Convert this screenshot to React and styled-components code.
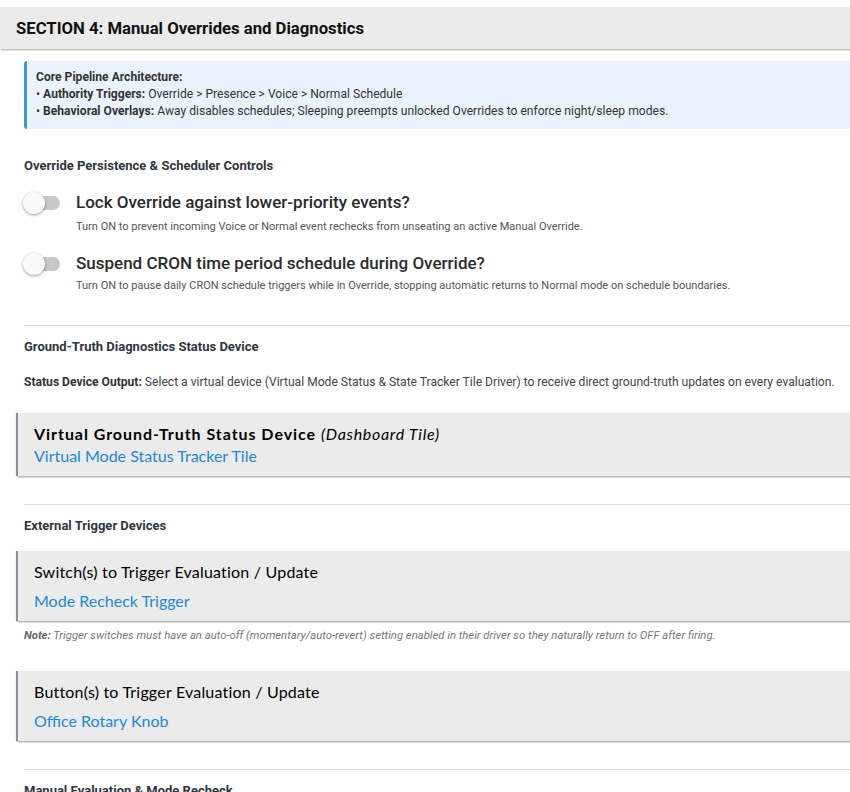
import React from 'react'
import styled, { createGlobalStyle } from 'styled-components'

const GlobalStyle = createGlobalStyle`
    html, body {
        margin: 0;
        padding: 0;
        background: #fff;
        overflow: hidden;
    }
    body {
        font-family: Roboto, "Liberation Sans", sans-serif;
        color: #333;
    }
`

const Page = styled.div`
    width: 870px;
    padding-top: 7px;
`

const SectionHeader = styled.div`
    background: #ebebeb;
    height: 42px;
    display: flex;
    align-items: center;
    padding-left: 16px;
    font-size: 16.7px;
    font-weight: 700;
    color: #111;
    box-shadow: 0 2px 2px -1px rgba(0, 0, 0, 0.35);
`

const Body = styled.div`
    padding: 12px 0 0 24px;
`

const InfoBox = styled.div`
    background: #eaf3fb;
    border-left: 3px solid #3a97d8;
    border-radius: 3px 0 0 3px;
    padding: 8px 12px 9px 9px;
    font-size: 12.1px;
    line-height: 17px;
    color: #333;
`

const InfoTitle = styled.div`
    font-weight: 700;
`

const GroupTitle = styled.div`
    font-size: 13px;
    font-weight: 700;
    color: #2f3640;
    margin-top: ${({ top }) => top || 0}px;
`

const ToggleRow = styled.div`
    display: flex;
    align-items: flex-start;
    margin-top: 17px;
`

const Track = styled.div`
    position: relative;
    flex: none;
    width: 36px;
    height: 14px;
    border-radius: 7px;
    background: #c8c8c8;
    margin-top: 6px;
`

const Knob = styled.div`
    position: absolute;
    left: -1px;
    top: -4px;
    width: 22px;
    height: 22px;
    border-radius: 50%;
    background: #fafafa;
    box-shadow: 0 1px 3px rgba(0, 0, 0, 0.4);
`

const ToggleText = styled.div`
    margin-left: 16px;
`

const ToggleLabel = styled.div`
    font-size: 17px;
    font-weight: 500;
    line-height: 24px;
    color: #2b2b2b;
`

const ToggleHint = styled.div`
    font-size: 11px;
    line-height: 14px;
    color: #555;
    margin-top: ${({ top }) => top}px;
`

const Divider = styled.hr`
    border: none;
    border-top: 1px solid #ddd;
    margin: ${({ top }) => top}px 0 0 0;
`

const Paragraph = styled.div`
    font-size: 12.1px;
    color: #444;
    margin-top: ${({ top }) => top || 0}px;
    b {
        color: #333;
    }
`

const DeviceBox = styled.div`
    margin: ${({ top }) => top}px 0 0 -8px;
    background: #ebebeb;
    border-left: 2px solid #8d8c99;
    padding: ${({ pad }) => pad};
    font-family: "Segoe UI", Lato, "DejaVu Sans", sans-serif;
    box-shadow: 0 2px 2px -1px rgba(0, 0, 0, 0.4), 0 -1px 4px rgba(0, 0, 0, 0.05);
`

const DeviceTitle = styled.div`
    font-size: 16px;
    line-height: 22px;
    color: #000;
    font-weight: ${({ bold }) => (bold ? 700 : 400)};
    letter-spacing: ${({ bold }) => (bold ? 0.95 : 0.2)}px;
    i {
        font-weight: 400;
        letter-spacing: 0.7px;
    }
`

const DeviceLink = styled.div`
    font-size: 16px;
    line-height: 22px;
    color: #1e88d9;
    margin-top: ${({ top }) => top || 0}px;
`

const Note = styled.div`
    font-size: 11.3px;
    font-style: italic;
    color: #777;
    margin-top: 8px;
    b {
        color: #666;
    }
`

const toggles = [
    {
        label: 'Lock Override against lower-priority events?',
        hint: 'Turn ON to prevent incoming Voice or Normal event rechecks from unseating an active Manual Override.'
    },
    {
        label: 'Suspend CRON time period schedule during Override?',
        hint: 'Turn ON to pause daily CRON schedule triggers while in Override, stopping automatic returns to Normal mode on schedule boundaries.'
    }
]

function Toggle() {
    return (
        <Track>
            <Knob />
        </Track>
    )
}

export default function App() {
    return (
        <Page>
            <GlobalStyle />
            <SectionHeader>SECTION 4: Manual Overrides and Diagnostics</SectionHeader>
            <Body>
                <InfoBox>
                    <InfoTitle>Core Pipeline Architecture:</InfoTitle>
                    <div>• <b>Authority Triggers:</b> Override &gt; Presence &gt; Voice &gt; Normal Schedule</div>
                    <div>• <b>Behavioral Overlays:</b> Away disables schedules; Sleeping preempts unlocked Overrides to enforce night/sleep modes.</div>
                </InfoBox>

                <GroupTitle top={29}>Override Persistence &amp; Scheduler Controls</GroupTitle>
                {toggles.map((t, i) => (
                    <ToggleRow key={i}>
                        <Toggle />
                        <ToggleText>
                            <ToggleLabel>{t.label}</ToggleLabel>
                            <ToggleHint top={i === 0 ? 6 : 4}>{t.hint}</ToggleHint>
                        </ToggleText>
                    </ToggleRow>
                ))}

                <Divider top={32} />
                <GroupTitle top={13}>Ground-Truth Diagnostics Status Device</GroupTitle>
                <Paragraph top={21}>
                    <b>Status Device Output:</b> Select a virtual device (Virtual Mode Status &amp; State Tracker Tile Driver) to receive direct ground-truth updates on every evaluation.
                </Paragraph>
                <DeviceBox top={24} pad="10px 16px 9px">
                    <DeviceTitle bold>
                        Virtual Ground-Truth Status Device <i>(Dashboard Tile)</i>
                    </DeviceTitle>
                    <DeviceLink>Virtual Mode Status Tracker Tile</DeviceLink>
                </DeviceBox>

                <Divider top={28} />
                <GroupTitle top={13}>External Trigger Devices</GroupTitle>
                <DeviceBox top={18} pad="10px 16px 9px">
                    <DeviceTitle>Switch(s) to Trigger Evaluation / Update</DeviceTitle>
                    <DeviceLink top={7}>Mode Recheck Trigger</DeviceLink>
                </DeviceBox>
                <Note>
                    <b>Note:</b> Trigger switches must have an auto-off (momentary/auto-revert) setting enabled in their driver so they naturally return to OFF after firing.
                </Note>

                <DeviceBox top={29} pad="10px 16px 9px">
                    <DeviceTitle>Button(s) to Trigger Evaluation / Update</DeviceTitle>
                    <DeviceLink top={7}>Office Rotary Knob</DeviceLink>
                </DeviceBox>

                <Divider top={28} />
                <GroupTitle top={13}>Manual Evaluation &amp; Mode Recheck</GroupTitle>
            </Body>
        </Page>
    )
}
